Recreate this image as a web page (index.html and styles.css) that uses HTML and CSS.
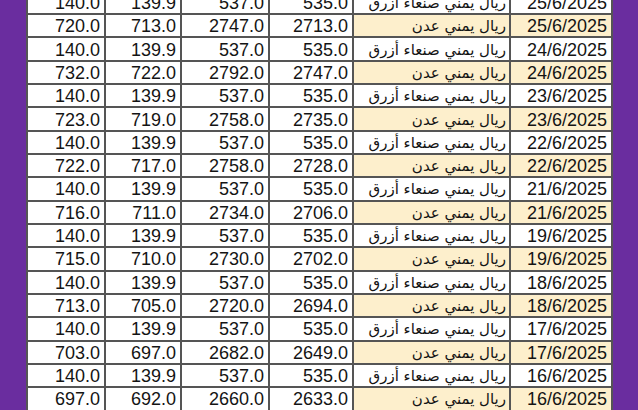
FILE: index.html
```html
<!DOCTYPE html>
<html lang="ar">
<head>
<meta charset="utf-8">
<link rel="stylesheet" href="styles.css">
</head>
<body>
<div class="frame">
<table class="rates" dir="ltr">
<colgroup>
<col class="c1"><col class="c2"><col class="c3"><col class="c4"><col class="c5"><col class="c6">
</colgroup>
<tbody>
<tr class="s"><td>140.0</td><td>139.9</td><td>537.0</td><td>535.0</td><td class="name" dir="rtl">ريال يمني صنعاء أزرق</td><td class="date">25/6/2025</td></tr>
<tr class="a"><td>720.0</td><td>713.0</td><td>2747.0</td><td>2713.0</td><td class="name" dir="rtl">ريال يمني عدن</td><td class="date">25/6/2025</td></tr>
<tr class="s"><td>140.0</td><td>139.9</td><td>537.0</td><td>535.0</td><td class="name" dir="rtl">ريال يمني صنعاء أزرق</td><td class="date">24/6/2025</td></tr>
<tr class="a"><td>732.0</td><td>722.0</td><td>2792.0</td><td>2747.0</td><td class="name" dir="rtl">ريال يمني عدن</td><td class="date">24/6/2025</td></tr>
<tr class="s"><td>140.0</td><td>139.9</td><td>537.0</td><td>535.0</td><td class="name" dir="rtl">ريال يمني صنعاء أزرق</td><td class="date">23/6/2025</td></tr>
<tr class="a"><td>723.0</td><td>719.0</td><td>2758.0</td><td>2735.0</td><td class="name" dir="rtl">ريال يمني عدن</td><td class="date">23/6/2025</td></tr>
<tr class="s"><td>140.0</td><td>139.9</td><td>537.0</td><td>535.0</td><td class="name" dir="rtl">ريال يمني صنعاء أزرق</td><td class="date">22/6/2025</td></tr>
<tr class="a"><td>722.0</td><td>717.0</td><td>2758.0</td><td>2728.0</td><td class="name" dir="rtl">ريال يمني عدن</td><td class="date">22/6/2025</td></tr>
<tr class="s"><td>140.0</td><td>139.9</td><td>537.0</td><td>535.0</td><td class="name" dir="rtl">ريال يمني صنعاء أزرق</td><td class="date">21/6/2025</td></tr>
<tr class="a"><td>716.0</td><td>711.0</td><td>2734.0</td><td>2706.0</td><td class="name" dir="rtl">ريال يمني عدن</td><td class="date">21/6/2025</td></tr>
<tr class="s"><td>140.0</td><td>139.9</td><td>537.0</td><td>535.0</td><td class="name" dir="rtl">ريال يمني صنعاء أزرق</td><td class="date">19/6/2025</td></tr>
<tr class="a"><td>715.0</td><td>710.0</td><td>2730.0</td><td>2702.0</td><td class="name" dir="rtl">ريال يمني عدن</td><td class="date">19/6/2025</td></tr>
<tr class="s"><td>140.0</td><td>139.9</td><td>537.0</td><td>535.0</td><td class="name" dir="rtl">ريال يمني صنعاء أزرق</td><td class="date">18/6/2025</td></tr>
<tr class="a"><td>713.0</td><td>705.0</td><td>2720.0</td><td>2694.0</td><td class="name" dir="rtl">ريال يمني عدن</td><td class="date">18/6/2025</td></tr>
<tr class="s"><td>140.0</td><td>139.9</td><td>537.0</td><td>535.0</td><td class="name" dir="rtl">ريال يمني صنعاء أزرق</td><td class="date">17/6/2025</td></tr>
<tr class="a"><td>703.0</td><td>697.0</td><td>2682.0</td><td>2649.0</td><td class="name" dir="rtl">ريال يمني عدن</td><td class="date">17/6/2025</td></tr>
<tr class="s"><td>140.0</td><td>139.9</td><td>537.0</td><td>535.0</td><td class="name" dir="rtl">ريال يمني صنعاء أزرق</td><td class="date">16/6/2025</td></tr>
<tr class="a"><td>697.0</td><td>692.0</td><td>2660.0</td><td>2633.0</td><td class="name" dir="rtl">ريال يمني عدن</td><td class="date">16/6/2025</td></tr>
</tbody>
</table>
</div>
</body>
</html>
```
FILE: styles.css
```css
html, body {
  margin: 0;
  padding: 0;
  background: #6a2d9f;
  height: 410px;
  overflow: hidden;
}
.frame {
  padding-left: 26px;
  height: 410px;
  overflow: hidden;
}
.rates {
  border-collapse: collapse;
  table-layout: fixed;
  width: 585px;
  margin-top: -10.3px;
  background: #ffffff;
  font-family: "Liberation Sans", "DejaVu Sans", Arial, sans-serif;
  font-size: 18px;
  color: #141414;
}
.c1 { width: 78px; }
.c2 { width: 76px; }
.c3 { width: 88px; }
.c4 { width: 84px; }
.c5 { width: 157px; }
.c6 { width: 102px; }
.rates tr { height: 23.33px; }
.rates td {
  border: 2px solid #555555;
  padding: 1px 4px 0 0;
  text-align: right;
  line-height: 20px;
  white-space: nowrap;
  overflow: hidden;
}
.rates td.name {
  font-family: "DejaVu Sans", "Liberation Sans", sans-serif;
  font-size: 15px;
  padding: 1px 3px 0 0;
  text-align: right;
}
.rates tr.a td.name,
.rates tr.a td.date {
  background: #fdefcc;
}
.rates td.date {
  padding-right: 4px;
}
```
